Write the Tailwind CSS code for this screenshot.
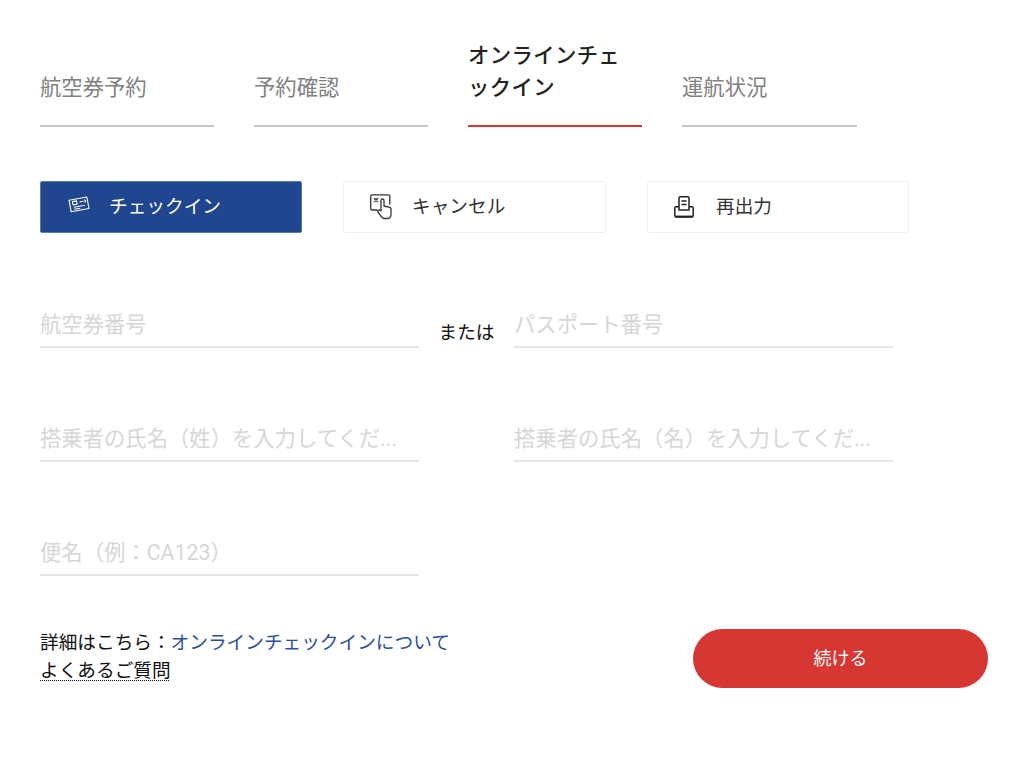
<!DOCTYPE html>
<html lang="ja">
<head>
<meta charset="utf-8">
<title>オンラインチェックイン</title>
<script src="https://cdn.jsdelivr.net/npm/@tailwindcss/browser@4"></script>
</head>
<body class="bg-white">
<div class="w-[1024px] h-[776px] overflow-hidden font-['Roboto','Noto_Sans_CJK_JP',sans-serif] text-[#222]">
  <nav class="flex gap-[40px] pl-[40px] pt-[39px]">
    <div class="w-[174px] h-[88px] flex items-end pb-[21px] border-b-2 border-[#c8c8c8] text-[21.33px] leading-[32px] text-[#808080]">航空券予約</div>
    <div class="w-[174px] h-[88px] flex items-end pb-[21px] border-b-2 border-[#c8c8c8] text-[21.33px] leading-[32px] text-[#808080]">予約確認</div>
    <div class="w-[174px] h-[88px] flex items-end pb-[21px] border-b-2 border-[#d73733] text-[21.33px] leading-[32px] tracking-[0.4px] font-medium text-[#222]"><span>オンラインチェ<br>ックイン</span></div>
    <div class="w-[175px] h-[88px] flex items-end pb-[21px] border-b-2 border-[#c8c8c8] text-[21.33px] leading-[32px] text-[#808080]">運航状況</div>
  </nav>

  <div class="flex gap-[41px] pl-[40px] mt-[54px]">
    <div class="w-[262px] h-[52px] flex items-center pl-[27px] gap-[19px] rounded-[2px] bg-[#20468f] border border-[#5b78b0] text-white text-[18.67px]">
      <svg class="w-[22px] h-[17px] -mt-[5px]" viewBox="0 0 22 17" fill="none" stroke="white" stroke-width="1.100" stroke-linejoin="round"><path d="M1 4.200 18.800 1 21 12.500 3.200 15.800z"/><path d="M4.500 5.600l4-.7.600 3.300-4 .7z"/><path d="M5.800 11.300l11-2M6.200 13.300l6-1.100M11.500 6l4-.7M16 3.800l1.800 1-1 1.700"/></svg>
      <span>チェックイン</span>
    </div>
    <div class="w-[263px] h-[52px] flex items-center pl-[26px] gap-[20px] rounded-[2px] border border-[#f0f0f0] text-[#333] text-[18.67px]">
      <svg class="w-[22px] h-[26px]" viewBox="0 0 22 26" fill="none" stroke="#333" stroke-width="1.300" stroke-linejoin="round" stroke-linecap="round"><path d="M7 16H2a1.300 1.300 0 0 1-1.300-1.300V2A1.300 1.300 0 0 1 2 .8h16.500A1.300 1.300 0 0 1 19.800 2v8"/><path d="M4.500 4.500l3 3M7.500 4.500l-3 3" stroke-width="1.500"/><path d="M11 17V6.500a1.500 1.500 0 0 1 3 0V12l5 1.200a2.200 2.200 0 0 1 2 2.200V21a3.500 3.500 0 0 1-3.500 3.500h-3a3.500 3.500 0 0 1-2.800-1.400L8 18c-1-1.300.9-2.700 2-1.600z"/></svg>
      <span>キャンセル</span>
    </div>
    <div class="w-[262px] h-[52px] flex items-center pl-[26px] gap-[22px] rounded-[2px] border border-[#f0f0f0] text-[#333] text-[18.67px]">
      <svg class="w-[20px] h-[22px]" viewBox="0 0 20 22" fill="none" stroke="#222" stroke-width="1.500" stroke-linejoin="round"><path d="M5 14V2a1.200 1.200 0 0 1 1.200-1.200h7.600A1.200 1.200 0 0 1 15 2v12z"/><path d="M7.500 5h5M7.500 8.500h5" stroke-width="1.300"/><path d="M5 10.800H2A1.200 1.200 0 0 0 .8 12v7.500A1.500 1.500 0 0 0 2.300 21h15.400a1.500 1.500 0 0 0 1.500-1.500V12a1.200 1.200 0 0 0-1.200-1.200H15"/><path d="M1 20.500h18" stroke-width="1.800"/></svg>
      <span>再出力</span>
    </div>
  </div>

  <form class="mt-[72px] pl-[40px] flex flex-col gap-[71px]">
    <div class="flex items-end">
      <div class="w-[379px] h-[43px] pb-[5px] flex items-end border-b-2 border-[#e6e6e6] text-[21.33px] leading-[32px] text-[#d6d6d6]"><span>航空券番号</span></div>
      <div class="w-[95px] h-[43px] flex items-end justify-center pb-[1px] text-[18.67px] leading-[28px] text-[#111]">または</div>
      <div class="w-[379px] h-[43px] pb-[5px] flex items-end border-b-2 border-[#e6e6e6] text-[21.33px] leading-[32px] text-[#d6d6d6]"><span>パスポート番号</span></div>
    </div>
    <div class="flex items-end">
      <div class="w-[379px] h-[43px] pb-[5px] flex items-end border-b-2 border-[#e6e6e6] text-[21.33px] leading-[32px] text-[#d6d6d6]"><span>搭乗者の氏名（姓）を入力してくだ...</span></div>
      <div class="w-[95px]"></div>
      <div class="w-[379px] h-[43px] pb-[5px] flex items-end border-b-2 border-[#e6e6e6] text-[21.33px] leading-[32px] text-[#d6d6d6]"><span>搭乗者の氏名（名）を入力してくだ...</span></div>
    </div>
    <div class="flex items-end">
      <div class="w-[379px] h-[43px] pb-[5px] flex items-end border-b-2 border-[#e6e6e6] text-[21.33px] leading-[32px] text-[#d6d6d6]"><span>便名（例：CA123）</span></div>
    </div>
  </form>

  <div class="flex justify-between items-start mt-[53px] pl-[40px] pr-[36px]">
    <div class="text-[18.67px] leading-[28px] text-[#111]">
      <div>詳細はこちら：<a class="text-[#2a4f9a]">オンラインチェックインについて</a></div>
      <div><a class="underline decoration-dotted decoration-[#111] decoration-1 underline-offset-[3px]">よくあるご質問</a></div>
    </div>
    <button class="w-[295px] h-[59px] rounded-full bg-[#d73733] text-white text-[18px]">続ける</button>
  </div>
</div>
</body>
</html>
